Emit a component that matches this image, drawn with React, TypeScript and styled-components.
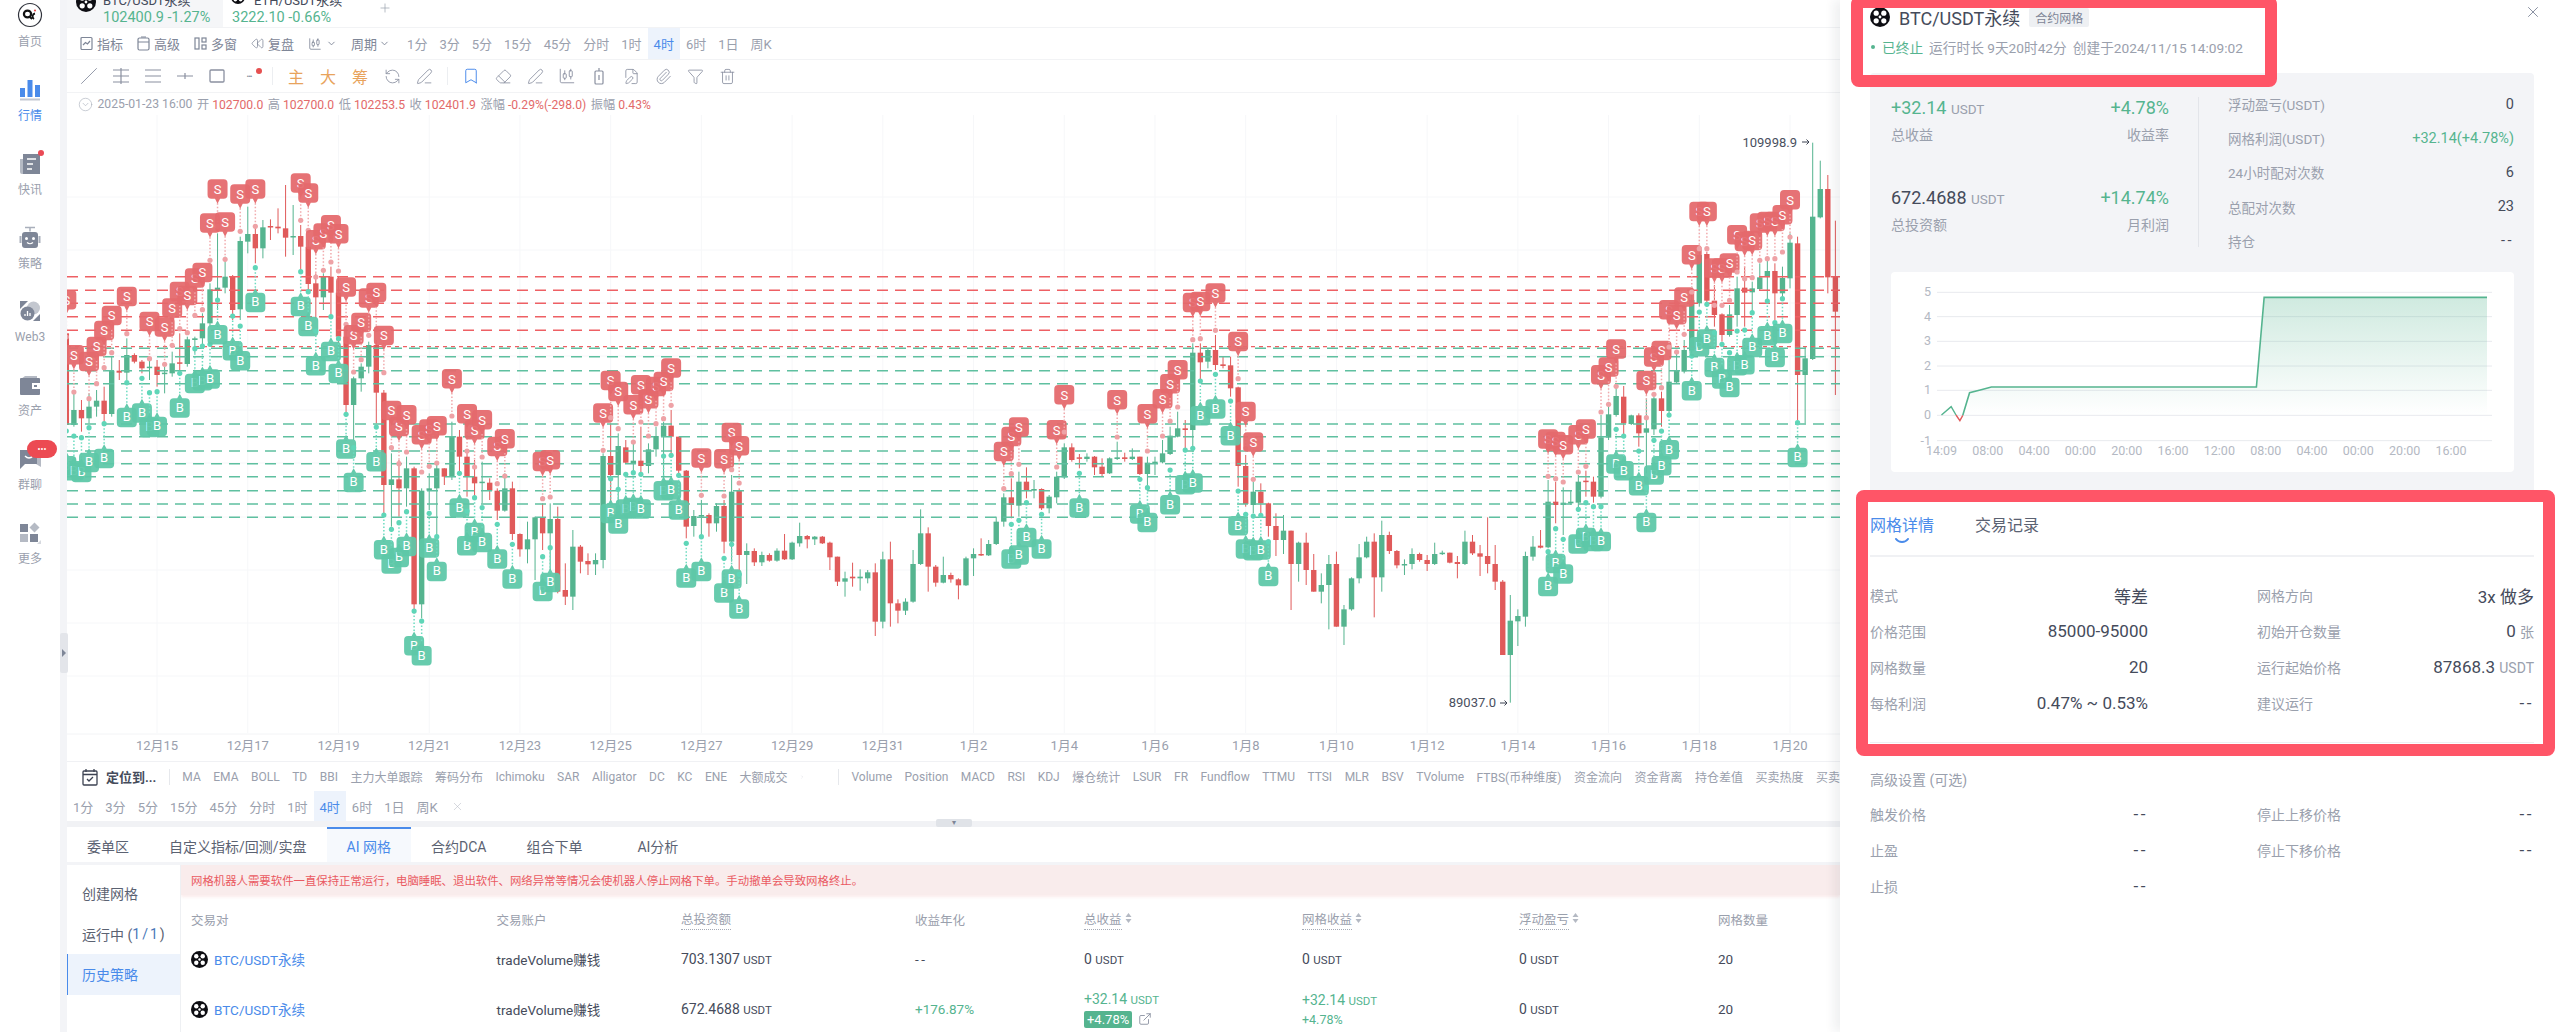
import React from 'react'
import styled, { createGlobalStyle } from 'styled-components'
import {
  Bookmark, CandlestickChart, ChevronDown, ChevronRight, CircleChevronDown, Eraser, ExternalLink, FilePen,
  Filter, Paperclip, PenLine, Plus, RefreshCcw, Rewind, Slash, Trash2, X,
} from 'lucide-react'

const FONT = `Roboto, "Noto Sans CJK SC", sans-serif`
const GREEN = '#55b48f'
const RED = '#e05a5a'
const BLUE = '#4a8bea'
const MUTED = '#9aa0ad'
const TEXT = '#454b5b'

const GlobalStyle = createGlobalStyle`
  html, body { margin: 0; padding: 0; width: 2555px; height: 1032px; overflow: hidden; background: #fff; }
  body { font-family: ${FONT}; color: ${TEXT}; }
  * { box-sizing: border-box; }
`

/* candles, read off the chart: colour, body top, body bottom, wick top, wick bottom */
type Section = { base: number; from: number; rows: string }

const CANDLES: Section[] = [
  {
    base: 160, from: -1, rows: `r520 795 500 830;g750 795 690 800;r750 775 720 815;g740 775 700 790;g722 740 690 770;r722 762 680 790;g632 762 590 770;r632 638 600 660;g585 638 535 660;r585 605 580 610;r605 625 600 640;g620 623 600 660;r620 645 600 680;g638 642 620 700;g610 640 575 650;r607 611 520 640;g538 612 530 620;g535 540 530 580;g490 535 460 560;g388 490 370 500;g383 390 220 450;g350 383 290 400;r348 450 345 480;g243 448 230 480;g222 245 140 280;r222 265 200 310;g202 265 180 295;r198 202 178 240;r200 205 145 220;r205 233 75 290;g228 232 135 285;r228 260 195 330;r260 372 240 400;r370 412 340 475;g350 412 340 450;r350 398 320 470;r398 530 350 560;r530 735 500 760;g655 735 650 840;g620 655 610 695;g555 620 545 640;r555 698 540 790;r698 975 690 1060;g958 975 880 1100;r958 985 900 1070;g925 985 890 1040;r925 1333 920 1360;g992 1333 985 1375;g985 992 940 1050;g925 985 905 1130;r925 950 925 975;g830 950 785 960;r830 890 810 940;r890 950 870 1010;r950 970 900 1010;g965 968 905 1030;r968 992 955 1020;r992 1052 985 1080;g985 1052 940 1055;r985 1122 965 1140;r1122 1168 1120 1190;g1138 1168 1085 1210;g1072 1138 1070 1260;r1072 1120 1030 1170;g1077 1120 1030 1230;r1077 1295 1040 1300;r1290 1310 1210 1335;g1160 1310 1110 1350;r1160 1205 1155 1240;r1203 1213 1180 1245;g1200 1213 1180 1245;g888 1200 880 1225;r888 945 790 1035;g858 945 820 1040;r862 908 840 910;g902 912 850 945;r902 918 800 950;g868 918 850 940;g828 868 800 890`,
  },
  {
    base: 280, from: 78, rows: `g437 470 425 600;r437 470 390 520;r470 572 470 590;r572 740 570 775;g708 738 690 770;g705 710 660 770;r705 730 700 770;g678 730 670 755;r678 785 660 820;g635 785 585 845;r632 825 625 870;g813 825 790 912;r813 847 805 858;g825 847 815 858;r825 842 820 845;g812 842 805 845;r812 838 762 840;g788 838 785 840;g768 790 728 800;r768 778 765 805;g770 778 768 795;r770 790 768 792;r788 832 785 870;r830 905 830 918;g895 905 875 950;r890 895 848 920;g890 895 868 932;g877 895 870 910;r877 1025 850 1068;g838 1025 815 1045;r838 970 785 1040;r970 992 958 1030;g965 992 955 1005;g852 965 810 968;g760 852 688 855;r760 860 742 935;r860 908 855 920;g885 908 830 910;r885 898 878 908;r898 916 895 958;g835 916 830 918;g822 835 805 888;r822 826 775 828;g792 826 780 828;g725 792 710 795;g652 725 640 740;r652 675 595 715;g605 677 575 710;r605 632 562 655;g627 632 600 655;r627 685 625 690;g650 685 645 700;g590 652 575 670;g502 592 490 597;r502 540 490 545;r532 536 522 565;g530 537 520 545;r530 562 528 585;r560 582 535 590;g535 580 532 582;g532 537 485 540;r532 537 518 545;g530 537 505 540;r530 582 530 585;g548 582 530 625;g545 550 530 585;g520 547 480 550;g467 522 440 525;g445 470 395 472;r445 450 420 505;g218 450 190 515;r218 247 190 300;g210 245 205 265;r210 255 165 270;r253 258 230 265;r256 325 230 350;r322 558 320 620;r558 672 525 680;g635 675 605 700;r635 670 610 710;r670 738 668 770;r738 780 700 828;g752 780 705 822;r752 852 752 990;g788 852 785 905;r788 870 758 915;r870 935 822 935;g915 935 880 970;g852 915 825 1048;r852 1040 815 1040;g988 1040 975 1095;g895 988 892 992;g832 895 792 910;g785 832 770 835;r785 892 760 1012;g765 892 722 935;r765 813 755 822;r813 856 810 865;g852 856 838 885;g822 852 805 868;r822 840 818 845;r840 852 825 873;g822 852 788 855;g818 822 812 825;r818 848 818 850;r846 852 828 895;g785 852 752 855;r785 820 765 825;r820 830 795 888;r828 852 712 880;r852 905 795 930;r905 1125 900 1125;g1022 1125 945 1268;g1008 1024 988 1098;g828 1010 815 1040;g800 830 768 842;r797 803 750 805;g665 802 600 805;r665 675 605 730;g668 675 622 765;g665 670 632 675;g605 668 585 690;r602 606 572 650;r605 650 590 668;g472 650 405 655`,
  },
  {
    base: 120, from: 203, rows: `g883 953 850 960;g828 885 790 890;r830 910 798 950;g886 912 884 915;r886 940 880 980;g925 938 835 1060;g835 928 830 945;r835 873 815 920;g785 873 720 890;g752 787 695 790;g690 755 660 760;g540 692 500 700;g405 550 390 560;r402 542 395 550;r542 585 495 620;r583 645 580 665;g583 645 555 650;g505 585 470 620;r503 518 440 620;g505 517 485 580;g472 507 430 510;g453 470 418 550;r453 520 430 600;g474 520 440 530;g368 475 340 505;r370 765 350 900;g715 765 680 910;g290 717 68 720;g207 292 122 295;r207 472 165 520;r470 575 302 825`,
  },
]

type MarkerSet = { base: number; items: [number, number][] }

const SELLS: MarkerSet[] = [
  { base: 160, items: [[-1, 420], [0, 585], [2, 605], [3, 560], [4, 512], [5, 467], [7, 410], [10, 485], [12, 502], [13, 445], [14, 395], [15, 407], [16, 355], [17, 338], [18, 190], [19, 88], [20, 187], [22, 103], [24, 88], [30, 70], [31, 100], [32, 240], [33, 220], [34, 195], [35, 222], [36, 382], [37, 525], [38, 488], [39, 415], [40, 398], [41, 527], [42, 752], [43, 800], [44, 765], [46, 825], [47, 808], [48, 798], [50, 657], [52, 762], [53, 810], [54, 780], [56, 860], [57, 837], [62, 905], [63, 900], [70, 760], [71, 662], [72, 695], [74, 735], [75, 675], [76, 717], [77, 680]] },
  { base: 280, items: [[78, 305], [79, 265], [83, 535], [86, 537], [87, 458], [88, 498], [123, 515], [124, 470], [125, 442], [130, 450], [131, 345], [138, 360], [142, 402], [144, 357], [145, 312], [146, 270], [148, 68], [149, 65], [151, 40], [154, 185], [155, 395], [156, 487], [195, 478], [196, 485], [197, 495], [199, 465], [200, 448], [202, 285], [203, 262], [204, 208], [208, 302], [209, 232], [210, 212], [211, 90], [212, 105], [213, 52]] },
  { base: 120, items: [[214, 405], [215, 275], [216, 275], [217, 445], [218, 445], [219, 430], [220, 345], [221, 365], [222, 362], [223, 310], [224, 305], [225, 305], [226, 285], [227, 240]] },
]

const BUYS: MarkerSet[] = [
  { base: 160, items: [[-1, 915], [0, 930], [1, 935], [2, 905], [4, 893], [7, 770], [9, 757], [10, 800], [11, 797], [14, 742], [16, 668], [17, 660], [18, 655], [19, 522], [21, 570], [22, 600], [24, 425], [30, 437], [31, 497], [32, 615], [34, 572], [35, 638], [36, 865], [37, 965], [40, 903], [41, 1167], [42, 1210], [43, 1190], [44, 1157], [45, 1455], [46, 1485], [47, 1162], [48, 1232], [51, 1042], [52, 1155], [53, 1115], [54, 1145], [56, 1195], [58, 1255], [62, 1292], [63, 1265], [71, 1058], [72, 1090], [73, 1045], [74, 1040], [75, 1045]] },
  { base: 280, items: [[78, 630], [79, 628], [80, 688], [81, 892], [83, 872], [86, 937], [87, 895], [88, 985], [124, 835], [125, 823], [126, 770], [128, 805], [133, 682], [141, 700], [142, 725], [145, 672], [147, 612], [148, 607], [149, 405], [151, 385], [153, 465], [154, 735], [155, 805], [156, 810], [157, 808], [158, 887], [195, 917], [196, 848], [197, 880], [199, 790], [200, 770], [201, 782], [202, 782], [204, 550], [205, 570], [207, 615], [208, 725], [209, 583], [210, 555], [211, 507], [214, 330], [215, 198], [216, 175], [217, 260], [218, 295], [219, 320], [220, 255], [221, 252], [222, 200], [224, 165], [225, 230], [226, 158], [228, 530]] },
]

const RED_LINES = [276.7, 290.3, 303.3, 316.7, 330.3]
const GREEN_LINES = [348.3, 356.7, 370.7, 383.7, 424, 436.7, 451, 463.7, 476.7, 490.7, 504, 517.3]
const DATES = ['12月15', '12月17', '12月19', '12月21', '12月23', '12月25', '12月27', '12月29', '12月31', '1月2', '1月4', '1月6', '1月8', '1月10', '1月12', '1月14', '1月16', '1月18', '1月20']
const H_GRID = [197, 250, 303, 356, 410, 463, 517, 570, 623, 676]

const candleX = (i: number) => 73.9 + 7.56 * i

const readCandles = () => {
  const out: { i: number; up: boolean; top: number; bottom: number; high: number; low: number }[] = []
  CANDLES.forEach(({ base, from, rows }) => {
    rows.split(';').forEach((row, n) => {
      const [top, bottom, high, low] = row.slice(1).split(' ').map(v => base + Number(v) / 3)
      out.push({ i: from + n, up: row[0] === 'g', top, bottom, high, low })
    })
  })
  return out
}

const sellPath = (x: number, y: number) =>
  `M${x - 6} ${y - 10}h12a4 4 0 0 1 4 4v11.5a4 4 0 0 1 -4 4h-3.5l-2.5 5l-2.5 -5h-3.5a4 4 0 0 1 -4 -4v-11.5a4 4 0 0 1 4 -4z`
const buyPath = (x: number, y: number) =>
  `M${x - 6} ${y - 9}h3.5l2.5 -4.5l2.5 4.5h3.5a4 4 0 0 1 4 4v11.5a4 4 0 0 1 -4 4h-12a4 4 0 0 1 -4 -4v-11.5a4 4 0 0 1 4 -4z`

const Marker: React.FC<{ i: number; y: number; kind: 'S' | 'B' }> = ({ i, y, kind }) => {
  const x = candleX(i)
  const isSell = kind === 'S'
  const dotY = isSell ? y + 37 : y - 34
  return (
    <g>
      <line x1={x} x2={x} y1={y} y2={dotY} stroke={isSell ? '#f1a9ac' : '#6ddcc0'} strokeWidth="1.5" strokeDasharray="1.5 2" />
      <circle cx={x} cy={dotY} r="2.6" fill={isSell ? '#eea2a6' : '#5fd6b8'} />
      <path d={isSell ? sellPath(x, y) : buyPath(x, y)} fill={isSell ? '#e4696c' : '#5dc8a8'} opacity="0.94" />
      <text x={x} y={y + 4.5} textAnchor="middle" fontSize="13" fontFamily="Roboto, sans-serif" fill="#fff">{kind}</text>
    </g>
  )
}

const KlineChart: React.FC = () => {
  const candles = readCandles()
  return (
    <ChartSvg viewBox="67 115 1773 646">
      {H_GRID.map(y => <line key={y} x1="67" x2="1840" y1={y} y2={y} stroke="#f6f7f9" />)}
      {DATES.map((_, n) => <line key={n} x1={candleX(11 + n * 12)} x2={candleX(11 + n * 12)} y1="115" y2="733" stroke="#f6f7f9" />)}
      {candles.map(c => (
        <g key={c.i} fill={c.up ? GREEN : RED}>
          <rect x={candleX(c.i) - 0.5} y={c.high} width="1" height={c.low - c.high} />
          <rect x={candleX(c.i) - 2.7} y={c.top} width="5.4" height={Math.max(c.bottom - c.top, 1.5)} />
        </g>
      ))}
      {RED_LINES.map(y => <line key={y} x1="67" x2="1840" y1={y} y2={y} stroke="#ee6064" strokeWidth="1.5" strokeDasharray="11 7" />)}
      <line x1="67" x2="1840" y1="346.7" y2="346.7" stroke="#ee6064" strokeWidth="1.3" strokeDasharray="4 4" />
      {GREEN_LINES.map(y => <line key={y} x1="67" x2="1840" y1={y} y2={y} stroke="#5fc0a0" strokeWidth="1.5" strokeDasharray="11 7" />)}
      {SELLS.flatMap(s => s.items.map(([i, z]) => <Marker key={`s${i}`} i={i} y={s.base + z / 3} kind="S" />))}
      {BUYS.flatMap(s => s.items.map(([i, z]) => <Marker key={`b${i}`} i={i} y={s.base + z / 3} kind="B" />))}
      <text x="1797" y="147" textAnchor="end" fontSize="13" fontFamily="Roboto, sans-serif" fill="#4a5060">109998.9</text>
      <path d="M1802 142h7m-2.5 -2.5l2.5 2.5l-2.5 2.5" fill="none" stroke="#3c4252" />
      <text x="1496" y="707" textAnchor="end" fontSize="13" fontFamily="Roboto, sans-serif" fill="#4a5060">89037.0</text>
      <path d="M1500 703h7m-2.5 -2.5l2.5 2.5l-2.5 2.5" fill="none" stroke="#3c4252" />
      <line x1="67" x2="1840" y1="734" y2="734" stroke="#f3f4f6" />
      {DATES.map((d, n) => (
        <text key={d} x={candleX(11 + n * 12)} y="750" textAnchor="middle" fontSize="13" fontFamily={FONT} fill={MUTED}>{d}</text>
      ))}
    </ChartSvg>
  )
}

const CoinIcon: React.FC<{ size: number }> = ({ size }) => (
  <svg width={size} height={size} viewBox="0 0 20 20">
    <circle cx="10" cy="10" r="10" fill="#0d0d12" />
    <circle cx="6.2" cy="6.2" r="2.6" fill="#fff" />
    <circle cx="13.8" cy="6.2" r="2.6" fill="#fff" />
    <circle cx="6.2" cy="13.8" r="2.6" fill="#fff" />
    <circle cx="13.8" cy="13.8" r="2.6" fill="#fff" />
    <circle cx="10" cy="10" r="1.4" fill="#fff" />
  </svg>
)

const SideIcon: React.FC<{ name: string }> = ({ name }) => {
  switch (name) {
    case '首页':
      return (
        <svg width="26" height="26" viewBox="0 0 26 26">
          <circle cx="13" cy="13" r="11.5" fill="#fff" stroke="#30333c" strokeWidth="1.2" />
          <ellipse cx="10.5" cy="12" rx="3.6" ry="3.3" fill="none" stroke="#111" strokeWidth="2.2" />
          <path d="M13 15l2 2M18 11.5a3 3 0 0 0 -1 5.5" fill="none" stroke="#111" strokeWidth="1.8" />
          <circle cx="18" cy="8.5" r="1.1" fill="#e65050" />
        </svg>
      )
    case '行情':
      return (
        <svg width="22" height="22" viewBox="0 0 22 22" fill={BLUE}>
          <rect x="1" y="9" width="5" height="9" />
          <rect x="8.5" y="1" width="5" height="17" />
          <rect x="16" y="6" width="5" height="12" />
          <rect x="1" y="19.5" width="20" height="2" fill="#c3c8d1" />
        </svg>
      )
    case '快讯':
      return (
        <svg width="22" height="22" viewBox="0 0 22 22">
          <path d="M1 6h5v15H3a2 2 0 0 1-2-2z" fill="#b5bac4" />
          <rect x="4" y="1" width="17" height="20" fill="#7e8697" />
          <path d="M8 6h9M8 11h6M8 16h5" stroke="#fff" strokeWidth="1.5" />
        </svg>
      )
    case '策略':
      return (
        <svg width="22" height="24" viewBox="0 0 22 24">
          <path d="M6 1.5h10M11 1.5v4" stroke="#a9afbb" strokeWidth="1.5" />
          <rect x="3" y="6" width="16" height="16" rx="3" fill="#7e8697" />
          <rect x="0.5" y="10" width="2" height="7" fill="#a9afbb" />
          <rect x="19.5" y="10" width="2" height="7" fill="#a9afbb" />
          <circle cx="7.5" cy="12.5" r="1.5" fill="#fff" />
          <circle cx="14.5" cy="12.5" r="1.5" fill="#fff" />
          <path d="M8 16.5q3 2.5 6 0" stroke="#fff" strokeWidth="1.2" fill="none" />
        </svg>
      )
    case 'Web3':
      return (
        <svg width="22" height="22" viewBox="0 0 22 22">
          <path d="M1 1h8L1 9z" fill="#7e8697" />
          <path d="M21 21h-7l7-7z" fill="#7e8697" />
          <circle cx="14.5" cy="8" r="6.5" fill="#c3c7cf" />
          <circle cx="8.5" cy="13.5" r="7" fill="#7e8697" />
          <path d="M6 16v-2M8.5 16v-5M11 16v-3" stroke="#fff" strokeWidth="1.3" />
        </svg>
      )
    case '资产':
      return (
        <svg width="22" height="22" viewBox="0 0 22 22">
          <path d="M2 5l4-3h12v3z" fill="#b5bac4" />
          <rect x="1" y="4" width="20" height="17" rx="1" fill="#7e8697" />
          <rect x="13" y="9" width="8" height="6" fill="#fff" />
          <rect x="15" y="11" width="3" height="2" fill="#7e8697" />
        </svg>
      )
    case '群聊':
      return (
        <svg width="22" height="24" viewBox="0 0 22 24">
          <path d="M17 5h5v15l-5-3z" fill="#b5bac4" />
          <path d="M1 3h17v14H6l-5 5z" fill="#7e8697" />
          <path d="M6 9q4 4 8 0" fill="none" stroke="#fff" strokeWidth="1.4" />
        </svg>
      )
    default:
      return (
        <svg width="22" height="22" viewBox="0 0 22 22" fill="#7e8697">
          <rect x="1" y="2" width="8" height="8" />
          <path d="M15.5 0.5l5 5l-5 5l-5-5z" fill="#b5bac4" />
          <rect x="1" y="12" width="8" height="8" fill="#b5bac4" />
          <rect x="11" y="12" width="8" height="8" />
          <path d="M22 18v4h-4z" fill="#d6d9df" />
        </svg>
      )
  }
}

const NAV = ['首页', '行情', '快讯', '策略', 'Web3', '资产', '群聊', '更多']
const PERIODS = ['1分', '3分', '5分', '15分', '45分', '分时', '1时', '4时', '6时', '1日', '周K']
const INDICATORS_A = ['MA', 'EMA', 'BOLL', 'TD', 'BBI', '主力大单跟踪', '筹码分布', 'Ichimoku', 'SAR', 'Alligator', 'DC', 'KC', 'ENE', '大额成交']
const INDICATORS_B = ['Volume', 'Position', 'MACD', 'RSI', 'KDJ', '爆仓统计', 'LSUR', 'FR', 'Fundflow', 'TTMU', 'TTSI', 'MLR', 'BSV', 'TVolume', 'FTBS(币种维度)', '资金流向', '资金背离', '持仓差值', '买卖热度', '买卖']
const BOTTOM_TABS = ['委单区', '自定义指标/回测/实盘', 'AI 网格', '合约DCA', '组合下单', 'AI分析']

const EquityChart: React.FC = () => {
  const px = (z: number) => 1800 + z / 2.064
  const py = (z: number) => z / 3
  const green = [[350, 1178], [372, 1170], [395, 1161], [942, 1161], [958, 892], [1418, 892]]
  const line = green.map(([x, y]) => `${px(x)} ${py(y)}`).join('L')
  const ticks: [string, number][] = [['5', 877], ['4', 950], ['3', 1024], ['2', 1098], ['1', 1171], ['0', 1246], ['-1', 1322]]
  const times = ['14:09', '08:00', '04:00', '00:00', '20:00', '16:00', '12:00', '08:00', '04:00', '00:00', '20:00', '16:00']
  return (
    <EquitySvg viewBox="1891 272 623 200">
      <defs>
        <linearGradient id="equityFill" x1="0" y1="0" x2="0" y2="1">
          <stop offset="0" stopColor="#55b48f" stopOpacity="0.28" />
          <stop offset="1" stopColor="#55b48f" stopOpacity="0" />
        </linearGradient>
      </defs>
      {ticks.map(([t, z]) => (
        <g key={t}>
          <line x1="1937" x2="2492" y1={py(z)} y2={py(z)} stroke="#e8eaee" />
          <text x="1931" y={py(z) + 4} textAnchor="end" fontSize="12.5" fontFamily="Roboto, sans-serif" fill="#b4b9c3">{t}</text>
        </g>
      ))}
      <path d={`M${line}L${px(1418)} ${py(1246)}L${px(350)} ${py(1246)}z`} fill="url(#equityFill)" />
      <path d={`M${px(292)} ${py(1245)}L${px(312)} ${py(1220)}L${px(322)} ${py(1245)}`} fill="none" stroke={GREEN} strokeWidth="1.4" />
      <path d={`M${px(322)} ${py(1245)}L${px(330)} ${py(1262)}L${px(336)} ${py(1246)}`} fill="none" stroke={RED} strokeWidth="1.4" />
      <path d={`M${px(336)} ${py(1246)}L${line}`} fill="none" stroke={GREEN} strokeWidth="1.6" />
      {times.map((t, n) => (
        <text key={n} x={px(292 + n * 95.6)} y="455" textAnchor="middle" fontSize="12.5" fontFamily="Roboto, sans-serif" fill="#b4b9c3">{t}</text>
      ))}
    </EquitySvg>
  )
}

const Usdt: React.FC<{ v: string; up?: boolean }> = ({ v, up }) => (
  <Amount $up={up}>{v} <small>USDT</small></Amount>
)

const SortArrows: React.FC = () => (
  <svg width="7" height="12" viewBox="0 0 7 12" fill="#b4b9c3"><path d="M3.5 1l3 4h-6zM3.5 11l3-4h-6z" /></svg>
)

const WindowIcon: React.FC = () => (
  <svg width="13" height="15" viewBox="0 0 13 15" fill="none" stroke="currentColor" strokeWidth="1.2"><rect x="1" y="2" width="11" height="12" rx="1.5" /><path d="M1 6h11M4 1h5" /></svg>
)

const PanesIcon: React.FC = () => (
  <svg width="13" height="15" viewBox="0 0 13 15" fill="none" stroke="currentColor" strokeWidth="1.2"><rect x="1" y="2" width="4" height="11" /><rect x="8" y="2" width="4" height="4" /><rect x="8" y="9" width="4" height="4" /></svg>
)

const ChartBoxIcon: React.FC = () => (
  <svg width="13" height="15" viewBox="0 0 13 15" fill="none" stroke="currentColor" strokeWidth="1.2"><rect x="1" y="1.5" width="11" height="12" rx="1" /><path d="M3 9l2.5-2.5l2 1.5l2.5-3" /></svg>
)

const renderRows = () => [
  { pair: 'BTC/USDT永续', invest: '703.1307', apr: <Plain><Dash>--</Dash></Plain>, total: <Usdt v="0" />, grid: <Usdt v="0" />, float: '0', count: '20' },
  {
    pair: 'BTC/USDT永续',
    invest: '672.4688',
    apr: <UpText>+176.87%</UpText>,
    total: (
      <Stack>
        <Usdt v="+32.14" up />
        <PctLine><PctChip>+4.78%</PctChip><ExternalLink size={14} color="#7e8697" strokeWidth={1.4} /></PctLine>
      </Stack>
    ),
    grid: (
      <Stack>
        <Usdt v="+32.14" up />
        <SmallUp>+4.78%</SmallUp>
      </Stack>
    ),
    float: '0',
    count: '20',
  },
]

const ADVANCED: [string, string][] = [['触发价格', '--'], ['停止上移价格', '--'], ['止盈', '--'], ['停止下移价格', '--'], ['止损', '--']]

export default function App() {
  const details: [string, React.ReactNode][] = [
    ['模式', '等差'], ['网格方向', '3x 做多'],
    ['价格范围', '85000-95000'], ['初始开仓数量', <>0 <Unit>张</Unit></>],
    ['网格数量', '20'], ['运行起始价格', <>87868.3 <Unit>USDT</Unit></>],
    ['每格利润', '0.47% ~ 0.53%'], ['建议运行', <Dash>--</Dash>],
  ]
  const summary: [string, React.ReactNode][] = [
    ['浮动盈亏(USDT)', '0'],
    ['网格利润(USDT)', <UpText>+32.14(+4.78%)</UpText>],
    ['24小时配对次数', '6'],
    ['总配对次数', '23'],
    ['持仓', <Dash>--</Dash>],
  ]
  return (
    <Page>
      <GlobalStyle />
      <Sidebar>
        {NAV.map(name => (
          <NavItem key={name} $active={name === '行情'} $first={name === '首页'}>
            <NavIcon>
              <SideIcon name={name} />
              {name === '快讯' && <NavDot />}
              {name === '群聊' && <ChatBadge>•••</ChatBadge>}
            </NavIcon>
            <span>{name}</span>
          </NavItem>
        ))}
        <CollapseHandle />
      </Sidebar>

      <Main>
        <SymbolTabs>
          <SymbolTab $active>
            <SymbolIcon><CoinIcon size={20} /></SymbolIcon>
            <SymbolName>BTC/USDT永续</SymbolName>
            <SymbolPrice>102400.9 -1.27%</SymbolPrice>
          </SymbolTab>
          <SymbolTab>
            <SymbolIcon $small><CoinIcon size={14} /></SymbolIcon>
            <SymbolName $indent>ETH/USDT永续</SymbolName>
            <SymbolPrice>3222.10 -0.66%</SymbolPrice>
          </SymbolTab>
          <AddTab><Plus size={14} strokeWidth={1.2} color="#9aa0ad" /></AddTab>
        </SymbolTabs>

        <ToolRow>
          <ToolBtn><ChartBoxIcon />指标</ToolBtn>
          <ToolBtn><WindowIcon />高级</ToolBtn>
          <ToolBtn><PanesIcon />多窗</ToolBtn>
          <ToolBtn><Rewind size={13} strokeWidth={1.4} />复盘</ToolBtn>
          <ToolBtn><CandlestickChart size={14} strokeWidth={1.4} /><ChevronDown size={11} /></ToolBtn>
          <ToolBtn $tight>周期<ChevronDown size={11} /></ToolBtn>
          <PeriodList $inset>
            {PERIODS.map(p => <Period key={p} $active={p === '4时'}>{p}</Period>)}
          </PeriodList>
        </ToolRow>

        <DrawRow>
          <DrawCell><Slash size={18} strokeWidth={1.2} /></DrawCell>
          <DrawCell>
            <svg width="18" height="18" viewBox="0 0 18 18" fill="none" stroke="currentColor" strokeWidth="1.2"><path d="M1 3h16M1 9h16M1 15h16M9 1v16" /></svg>
          </DrawCell>
          <DrawCell>
            <svg width="18" height="18" viewBox="0 0 18 18" fill="none" stroke="currentColor" strokeWidth="1.2"><path d="M1 3h16M1 9h16M1 15h16" /></svg>
          </DrawCell>
          <DrawCell>
            <svg width="18" height="18" viewBox="0 0 18 18" fill="none" stroke="currentColor" strokeWidth="1.2"><path d="M1 9h16M9 6v6" /></svg>
          </DrawCell>
          <DrawCell>
            <svg width="18" height="18" viewBox="0 0 18 18" fill="none" stroke="currentColor" strokeWidth="1.3"><rect x="2" y="3" width="14" height="12" rx="1" /></svg>
          </DrawCell>
          <DrawCell>
            <Dots>•••</Dots>
            <RedDot />
          </DrawCell>
          <DrawSep />
          <DrawWord>主</DrawWord>
          <DrawWord>大</DrawWord>
          <DrawWord>筹</DrawWord>
          <DrawCell><RefreshCcw size={17} strokeWidth={1.2} /></DrawCell>
          <DrawCell><PenLine size={17} strokeWidth={1.2} /></DrawCell>
          <DrawSep />
          <DrawCell $active><Bookmark size={18} strokeWidth={1.3} /></DrawCell>
          <DrawCell><Eraser size={17} strokeWidth={1.2} /></DrawCell>
          <DrawCell><PenLine size={17} strokeWidth={1.2} /></DrawCell>
          <DrawCell><CandlestickChart size={18} strokeWidth={1.2} /></DrawCell>
          <DrawCell>
            <svg width="18" height="18" viewBox="0 0 18 18" fill="none" stroke="currentColor" strokeWidth="1.2"><rect x="5" y="4" width="8" height="13" rx="1" /><path d="M9 1v3M9 8v5" /></svg>
          </DrawCell>
          <DrawCell><FilePen size={17} strokeWidth={1.2} /></DrawCell>
          <DrawCell><Paperclip size={17} strokeWidth={1.2} /></DrawCell>
          <DrawCell><Filter size={17} strokeWidth={1.2} /></DrawCell>
          <DrawCell><Trash2 size={17} strokeWidth={1.2} /></DrawCell>
        </DrawRow>

        <OhlcRow>
          <CircleChevronDown size={15} strokeWidth={1} color="#aab0bb" />
          <span>2025-01-23 16:00</span>
          <span>开 <b>102700.0</b></span>
          <span>高 <b>102700.0</b></span>
          <span>低 <b>102253.5</b></span>
          <span>收 <b>102401.9</b></span>
          <span>涨幅 <b>-0.29%(-298.0)</b></span>
          <span>振幅 <b>0.43%</b></span>
        </OhlcRow>

        <KlineChart />

        <IndicatorRow>
          <CalendarBox>
            <svg width="16" height="18" viewBox="0 0 16 18" fill="none" stroke="#3c4252" strokeWidth="1.3"><rect x="1" y="3" width="14" height="14" rx="1" /><path d="M1 6.5h14M4 1v3M12 1v3M5 11l2 2l4-4" /></svg>
            <strong>定位到...</strong>
          </CalendarBox>
          <IndicatorSep />
          {INDICATORS_A.map(n => <span key={n}>{n}</span>)}
          <ChevronRight size={14} strokeWidth={1} />
          <IndicatorSep $pushed />
          {INDICATORS_B.map(n => <span key={n}>{n}</span>)}
        </IndicatorRow>

        <PeriodList>
          {PERIODS.map(p => <Period key={p} $active={p === '4时'} $tall>{p}</Period>)}
          <CloseCell><X size={13} strokeWidth={1} /></CloseCell>
        </PeriodList>

        <SplitBar><SplitGrip>▾</SplitGrip></SplitBar>

        <BottomTabs>
          {BOTTOM_TABS.map(t => <BottomTab key={t} $active={t === 'AI 网格'}>{t}</BottomTab>)}
        </BottomTabs>

        <BottomBody>
          <GridMenu>
            <GridMenuItem>创建网格</GridMenuItem>
            <GridMenuItem>运行中 (<Count>1/1</Count>)</GridMenuItem>
            <GridMenuItem $active>历史策略</GridMenuItem>
          </GridMenu>
          <TableArea>
            <Notice>网格机器人需要软件一直保持正常运行，电脑睡眠、退出软件、网络异常等情况会使机器人停止网格下单。手动撤单会导致网格终止。</Notice>
            <TableGrid $head>
              <HeadCell>交易对</HeadCell>
              <HeadCell>交易账户</HeadCell>
              <HeadCell><u>总投资额</u></HeadCell>
              <HeadCell>收益年化</HeadCell>
              <HeadCell><u>总收益</u> <SortArrows /></HeadCell>
              <HeadCell><u>网格收益</u> <SortArrows /></HeadCell>
              <HeadCell><u>浮动盈亏</u> <SortArrows /></HeadCell>
              <HeadCell>网格数量</HeadCell>
            </TableGrid>
            {renderRows().map(r => (
              <TableGrid key={r.invest}>
                <PairCell><CoinIcon size={17} /><span>{r.pair}</span></PairCell>
                <Plain>tradeVolume赚钱</Plain>
                <Usdt v={r.invest} />
                {r.apr}
                {r.total}
                {r.grid}
                <Usdt v={r.float} />
                <Plain>{r.count}</Plain>
              </TableGrid>
            ))}
          </TableArea>
        </BottomBody>
      </Main>

      <Panel>
        <CloseBtn><X size={18} strokeWidth={1.2} /></CloseBtn>
        <TitleRow>
          <CoinIcon size={20} />
          <PanelTitle>BTC/USDT永续</PanelTitle>
          <TypeBadge>合约网格</TypeBadge>
        </TitleRow>
        <StatusRow>
          <StatusDot />
          <StatusWord>已终止</StatusWord>
          <span>运行时长 9天20时42分</span>
          <span>创建于2024/11/15 14:09:02</span>
        </StatusRow>

        <SummaryCard>
          <SummaryTop>
            <div>
              <StatGroup>
                <StatLine><StatValue $up>+32.14 <small>USDT</small></StatValue><StatValue $up>+4.78%</StatValue></StatLine>
                <StatLine $label><span>总收益</span><span>收益率</span></StatLine>
              </StatGroup>
              <StatGroup>
                <StatLine><StatValue>672.4688 <small>USDT</small></StatValue><StatValue $up>+14.74%</StatValue></StatLine>
                <StatLine $label><span>总投资额</span><span>月利润</span></StatLine>
              </StatGroup>
            </div>
            <VDivider />
            <div>
              {summary.map(([k, v]) => (
                <SummaryRow key={k}><span>{k}</span><b>{v}</b></SummaryRow>
              ))}
            </div>
          </SummaryTop>
          <EquityChart />
        </SummaryCard>

        <DetailTabs>
          <DetailTab $active>网格详情<svg width="16" height="6" viewBox="0 0 16 6"><path d="M2 1c3 4 9 4 12 0" fill="none" stroke={BLUE} strokeWidth="2" strokeLinecap="round" /></svg></DetailTab>
          <DetailTab>交易记录</DetailTab>
        </DetailTabs>

        <DetailGrid $ruled>
          {details.map(([k, v]) => (
            <DetailItem key={k}><span>{k}</span><DetailValue>{v}</DetailValue></DetailItem>
          ))}
        </DetailGrid>

        <AdvancedTitle>高级设置 (可选)</AdvancedTitle>
        <DetailGrid>
          {ADVANCED.map(([k, v]) => (
            <DetailItem key={k}><span>{k}</span><DetailValue><Dash>{v}</Dash></DetailValue></DetailItem>
          ))}
        </DetailGrid>

        <MarkBoxTop />
        <MarkBoxBottom />
      </Panel>
    </Page>
  )
}

const Page = styled.div`
  display: flex;
  width: 2555px;
  height: 1032px;
  overflow: hidden;
  background: #fff;
`

const Sidebar = styled.nav`
  position: relative;
  flex: 0 0 67px;
  border-right: 7px solid #f3f4f7;
  display: flex;
  flex-direction: column;
  align-items: center;
`

const NavItem = styled.div<{ $active?: boolean; $first?: boolean }>`
  width: 100%;
  height: ${p => (p.$first ? '52px' : '73.8px')};
  padding-top: ${p => (p.$first ? '1px' : '24px')};
  display: flex;
  flex-direction: column;
  align-items: center;
  gap: ${p => (p.$first ? '5px' : '4px')};
  font-size: 12px;
  line-height: 16px;
  color: ${p => (p.$active ? BLUE : MUTED)};
`

const NavIcon = styled.div`
  position: relative;
  height: 28px;
  display: flex;
  align-items: center;
  justify-content: center;
`

const NavDot = styled.i`
  position: absolute;
  top: 0;
  right: -3px;
  width: 6px;
  height: 6px;
  border-radius: 50%;
  background: #ea4a55;
`

const ChatBadge = styled.i`
  position: absolute;
  top: -5px;
  left: 8px;
  width: 30px;
  height: 18px;
  border-radius: 9px;
  background: #ec4a52;
  color: #fff;
  font-style: normal;
  font-size: 9px;
  line-height: 18px;
  text-align: center;
`

const CollapseHandle = styled.div`
  position: absolute;
  top: 633px;
  left: 60px;
  width: 8px;
  height: 40px;
  border-radius: 2px;
  background: #e3e5ea;
  &::after {
    content: '';
    position: absolute;
    top: 16px;
    left: 2px;
    border-left: 4px solid #7e8697;
    border-top: 4px solid transparent;
    border-bottom: 4px solid transparent;
  }
`

const Main = styled.main`
  flex: 0 0 1773px;
  min-width: 0;
  display: flex;
  flex-direction: column;
  overflow: hidden;
`

const SymbolTabs = styled.div`
  flex: 0 0 27px;
  display: flex;
  align-items: flex-end;
  overflow: hidden;
`

const SymbolTab = styled.div<{ $active?: boolean }>`
  position: relative;
  flex: 0 0 ${p => (p.$active ? '156px' : '155px')};
  height: 27px;
  padding-left: ${p => (p.$active ? '36px' : '9px')};
  display: flex;
  flex-direction: column;
  justify-content: flex-end;
  background: ${p => (p.$active ? '#f5f6f8' : '#fff')};
`

const SymbolIcon = styled.div<{ $small?: boolean }>`
  position: absolute;
  left: ${p => (p.$small ? '8px' : '9px')};
  top: ${p => (p.$small ? '-11px' : '-8px')};
`

const SymbolName = styled.div<{ $indent?: boolean }>`
  padding-left: ${p => (p.$indent ? '22px' : '0')};
  font-size: 13px;
  line-height: 16px;
  color: ${TEXT};
  white-space: nowrap;
`

const SymbolPrice = styled.div`
  font-size: 14.5px;
  line-height: 18px;
  color: ${GREEN};
  white-space: nowrap;
`

const AddTab = styled.div`
  align-self: flex-start;
  color: ${MUTED};
`

const ToolRow = styled.div`
  flex: 0 0 33px;
  padding-left: 13px;
  display: flex;
  align-items: center;
  gap: 14px;
  border-top: 1px solid #f2f3f5;
  border-bottom: 1px solid #f2f3f5;
  font-size: 13px;
  color: #7e8697;
`

const ToolBtn = styled.div<{ $tight?: boolean }>`
  display: flex;
  align-items: center;
  gap: ${p => (p.$tight ? '2px' : '4px')};
  white-space: nowrap;
`

const PeriodList = styled.div<{ $inset?: boolean }>`
  display: flex;
  align-items: center;
  margin-left: ${p => (p.$inset ? '-3px' : '0')};
  font-size: 13px;
  color: ${MUTED};
  flex: ${p => (p.$inset ? '0 0 auto' : '0 0 30px')};
  height: ${p => (p.$inset ? '100%' : '30px')};
`

const Period = styled.div<{ $active?: boolean; $tall?: boolean }>`
  height: ${p => (p.$tall ? '30px' : '100%')};
  padding: 0 6px;
  min-width: 31px;
  display: flex;
  align-items: center;
  justify-content: center;
  white-space: nowrap;
  color: ${p => (p.$active ? BLUE : MUTED)};
  background: ${p => (p.$active ? '#edf3fc' : 'transparent')};
`

const CloseCell = styled.div`
  margin-left: 7px;
  display: flex;
  color: #b4b9c3;
`

const DrawRow = styled.div`
  flex: 0 0 33px;
  padding-left: 6px;
  display: flex;
  align-items: center;
  border-bottom: 1px solid #f2f3f5;
  color: #8a90a0;
`

const DrawCell = styled.div<{ $active?: boolean }>`
  position: relative;
  flex: 0 0 32px;
  display: flex;
  align-items: center;
  justify-content: center;
  color: ${p => (p.$active ? BLUE : 'inherit')};
`

const DrawWord = styled(DrawCell)`
  font-size: 16px;
  color: #e8a35c;
`

const DrawSep = styled.div`
  flex: 0 0 15px;
  height: 18px;
  background: linear-gradient(#eceef1, #eceef1) center / 1px 100% no-repeat;
`

const Dots = styled.span`
  font-size: 8px;
  letter-spacing: -1px;
`

const RedDot = styled.i`
  position: absolute;
  top: -4px;
  right: 3px;
  width: 6px;
  height: 6px;
  border-radius: 50%;
  background: #e65050;
`

const OhlcRow = styled.div`
  flex: 0 0 22px;
  padding-left: 11px;
  display: flex;
  align-items: center;
  gap: 4.5px;
  font-size: 12.2px;
  color: ${MUTED};
  white-space: nowrap;
  b {
    font-weight: 400;
    color: #e36a6a;
  }
`

const ChartSvg = styled.svg`
  flex: 0 0 646px;
  width: 1773px;
  height: 646px;
  display: block;
`

const IndicatorRow = styled.div`
  flex: 0 0 30px;
  padding-left: 15px;
  display: flex;
  align-items: center;
  gap: 12.5px;
  overflow: hidden;
  border-top: 1px solid #f0f1f4;
  font-size: 12px;
  color: ${MUTED};
  white-space: nowrap;
`

const CalendarBox = styled.div`
  display: flex;
  align-items: center;
  gap: 8px;
  color: ${TEXT};
  strong {
    font-weight: 700;
    font-size: 13px;
  }
`

const IndicatorSep = styled.i<{ $pushed?: boolean }>`
  flex: 0 0 1px;
  height: 16px;
  margin-left: ${p => (p.$pushed ? '21px' : '0')};
  background: #e6e8ec;
`

const SplitBar = styled.div`
  flex: 0 0 6px;
  background: #f1f2f5;
  display: flex;
  justify-content: center;
`

const SplitGrip = styled.div`
  width: 36px;
  height: 8px;
  margin-top: -2px;
  border-radius: 2px;
  background: #e0e3e8;
  color: #7e8697;
  font-size: 8px;
  line-height: 8px;
  text-align: center;
`

const BottomTabs = styled.div`
  flex: 0 0 35px;
  display: flex;
  align-items: stretch;
  padding-left: 0;
  font-size: 14px;
  color: #5b6272;
`

const BottomTab = styled.div<{ $active?: boolean }>`
  padding: 0 20px;
  display: flex;
  align-items: center;
  white-space: nowrap;
  color: ${p => (p.$active ? BLUE : 'inherit')};
  background: ${p => (p.$active ? '#f6f9fd' : 'transparent')};
  border-top: 2px solid ${p => (p.$active ? BLUE : 'transparent')};
  &:last-child {
    margin-left: 15px;
  }
`

const BottomBody = styled.div`
  flex: 1;
  display: flex;
  border-top: 3px solid #f3f4f7;
`

const GridMenu = styled.div`
  flex: 0 0 114px;
  padding-top: 8px;
  border-right: 1px solid #eef0f3;
`

const GridMenuItem = styled.div<{ $active?: boolean }>`
  height: 40.5px;
  padding-left: 14px;
  display: flex;
  align-items: center;
  font-size: 14px;
  color: ${p => (p.$active ? BLUE : '#5b6272')};
  background: ${p => (p.$active ? '#edf3fc' : 'transparent')};
  border-left: 1px solid ${p => (p.$active ? BLUE : 'transparent')};
`

const Count = styled.span`
  color: #4a78b8;
  letter-spacing: 2px;
`

const TableArea = styled.div`
  flex: 1;
  min-width: 0;
  overflow: hidden;
`

const Notice = styled.div`
  height: 30px;
  padding-left: 10px;
  display: flex;
  align-items: center;
  background: #f9ecec;
  box-shadow: 0 2px 3px rgba(224, 90, 90, 0.12);
  font-size: 11.4px;
  color: #ea5a62;
  white-space: nowrap;
`

const TableGrid = styled.div<{ $head?: boolean }>`
  display: grid;
  grid-template-columns: 305.6px 184.4px 234px 169px 218px 217px 199px 1fr;
  align-items: center;
  height: ${p => (p.$head ? '39px' : '50px')};
  padding: ${p => (p.$head ? '12px 0 0 10px' : '0 0 0 10px')};
  font-size: 13.5px;
`

const HeadCell = styled.div`
  font-size: 12.5px;
  line-height: 18px;
  color: ${MUTED};
  u {
    text-decoration: none;
    display: inline-block;
    border-bottom: 1px dotted #a6abb6;
  }
`

const PairCell = styled.div`
  display: flex;
  align-items: center;
  gap: 6px;
  color: ${BLUE};
  font-size: 13.5px;
`

const Plain = styled.div`
  color: ${TEXT};
`

const Dash = styled.span`
  display: inline-block;
  white-space: nowrap;
  letter-spacing: 2.5px;
`

const UpText = styled.span`
  color: ${GREEN};
`

const Amount = styled.div<{ $up?: boolean }>`
  font-size: 14px;
  color: ${p => (p.$up ? GREEN : TEXT)};
  small {
    font-size: 11.5px;
  }
`

const Stack = styled.div`
  display: flex;
  flex-direction: column;
  gap: 4px;
`

const PctLine = styled.div`
  display: flex;
  align-items: center;
  gap: 6px;
`

const PctChip = styled.span`
  padding: 1px 3px;
  border-radius: 2px;
  background: ${GREEN};
  color: #fff;
  font-size: 13px;
  line-height: 15px;
`

const SmallUp = styled.span`
  font-size: 12.5px;
  line-height: 15px;
  color: ${GREEN};
`

const Panel = styled.aside`
  position: relative;
  flex: 0 0 715px;
  padding: 0 21px 0 30px;
  background: #fff;
  box-shadow: -6px 0 10px rgba(30, 40, 60, 0.07);
  font-size: 14px;
`

const CloseBtn = styled.div`
  position: absolute;
  top: 3px;
  right: 13px;
  color: #7e8697;
`

const TitleRow = styled.div`
  height: 34px;
  display: flex;
  align-items: center;
  gap: 9px;
`

const PanelTitle = styled.div`
  font-size: 18px;
  color: ${TEXT};
  white-space: nowrap;
`

const TypeBadge = styled.div`
  height: 19px;
  padding: 0 6px;
  display: flex;
  align-items: center;
  border-radius: 2px;
  background: #eef0f3;
  color: #7e8697;
  font-size: 12px;
`

const StatusRow = styled.div`
  height: 26px;
  margin-bottom: 13px;
  display: flex;
  align-items: center;
  gap: 6px;
  font-size: 13.7px;
  color: ${MUTED};
  white-space: nowrap;
`

const StatusDot = styled.i`
  width: 4px;
  height: 4px;
  margin: 0 1px;
  border-radius: 50%;
  background: ${GREEN};
`

const StatusWord = styled.span`
  color: ${GREEN};
`

const SummaryCard = styled.section`
  height: 417px;
  padding: 0 20px 0 21px;
  border-radius: 4px 4px 0 0;
  background: #f3f4f7;
`

const SummaryTop = styled.div`
  height: 199px;
  padding-top: 14px;
  display: grid;
  grid-template-columns: 278px 59px 1fr;
`

const StatGroup = styled.div`
  height: 90px;
  padding-top: 8px;
`

const StatLine = styled.div<{ $label?: boolean }>`
  display: flex;
  justify-content: space-between;
  align-items: center;
  height: ${p => (p.$label ? '20px' : '24px')};
  margin-top: ${p => (p.$label ? '5px' : '0')};
  color: ${MUTED};
  font-size: 14px;
`

const StatValue = styled.span<{ $up?: boolean }>`
  font-size: 18px;
  color: ${p => (p.$up ? GREEN : TEXT)};
  small {
    font-size: 13.5px;
    color: ${MUTED};
  }
`

const VDivider = styled.div`
  justify-self: center;
  width: 1px;
  height: 150px;
  margin-top: 10px;
  background: #e3e5ea;
`

const SummaryRow = styled.div`
  height: 34.2px;
  display: flex;
  justify-content: space-between;
  align-items: center;
  color: ${MUTED};
  font-size: 13.5px;
  b {
    font-weight: 400;
    font-size: 14.5px;
    color: ${TEXT};
  }
`

const EquitySvg = styled.svg`
  display: block;
  width: 623px;
  height: 200px;
  border-radius: 4px;
  background: #fff;
`

const DetailTabs = styled.div`
  height: 67px;
  padding-top: 25px;
  display: flex;
  gap: 41px;
  border-bottom: 2px solid #f0f1f4;
  font-size: 16px;
  line-height: 22px;
  color: #5b6272;
`

const DetailTab = styled.div<{ $active?: boolean }>`
  display: flex;
  flex-direction: column;
  align-items: center;
  gap: 1px;
  color: ${p => (p.$active ? BLUE : 'inherit')};
`

const DetailGrid = styled.div<{ $ruled?: boolean }>`
  display: grid;
  grid-template-columns: 278px 277px;
  justify-content: space-between;
  margin-top: ${p => (p.$ruled ? '20px' : '5px')};
  padding-bottom: ${p => (p.$ruled ? '21px' : '0')};
  border-bottom: ${p => (p.$ruled ? '1px solid #eeeff2' : 'none')};
`

const DetailItem = styled.div`
  height: 36px;
  display: flex;
  justify-content: space-between;
  align-items: center;
  color: ${MUTED};
  font-size: 14px;
`

const DetailValue = styled.span`
  font-size: 17px;
  color: ${TEXT};
`

const Unit = styled.span`
  font-size: 14px;
  color: ${MUTED};
`

const AdvancedTitle = styled.div`
  margin-top: 26px;
  line-height: 22px;
  font-size: 14px;
  color: ${MUTED};
`

const MarkBoxTop = styled.div`
  position: absolute;
  left: 11px;
  top: -4px;
  width: 426px;
  height: 91px;
  border: 12px solid #ff5567;
  border-radius: 8px;
  pointer-events: none;
`

const MarkBoxBottom = styled.div`
  position: absolute;
  left: 16px;
  right: 0;
  top: 490px;
  height: 266px;
  border: 12px solid #ff5567;
  border-radius: 8px;
  pointer-events: none;
`
